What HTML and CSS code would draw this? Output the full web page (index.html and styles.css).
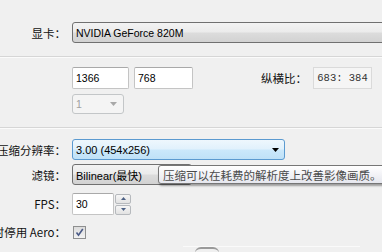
FILE: index.html
```html
<!DOCTYPE html>
<html>
<head>
    <title>显示设置</title>
    <link rel="stylesheet" href="styles.css">
</head>
<body>

<div class="panel">
    <div class="row row-gpu">
        <span class="lbl">显卡：</span>
        <div class="combo combo-gpu">NVIDIA GeForce 820M</div>
    </div>

    <div class="sep sep-top"></div>

    <div class="res">
        <div class="res-left">
            <div class="pair">
                <div class="edit edit-w">1366</div>
                <div class="edit edit-h">768</div>
            </div>
            <div class="combo-off">
                <span>1</span>
                <svg width="7" height="4" viewBox="0 0 7 4"><path d="M0 0H7L3.5 4Z" fill="#a8a8a8"/></svg>
            </div>
        </div>
        <div class="ratio">
            <span class="ratio-lbl">纵横比：</span>
            <div class="ratio-box">683: 384</div>
        </div>
    </div>

    <div class="sep sep-mid"></div>

    <div class="row row-scale">
        <span class="lbl">压缩分辨率：</span>
        <div class="combo combo-hot">
            <span>3.00 (454x256)</span>
            <svg width="7" height="4" viewBox="0 0 7 4"><path d="M0 0H7L3.5 4Z" fill="#000"/></svg>
        </div>
    </div>

    <div class="row row-filter">
        <span class="lbl">滤镜：</span>
        <div class="combo combo-filter">Bilinear(最快)</div>
        <div class="tip">压缩可以在耗费的解析度上改善影像画质。</div>
    </div>

    <div class="row row-fps">
        <span class="lbl">FPS：</span>
        <div class="edit edit-fps">30</div>
        <div class="spin">
            <div class="spin-btn">
                <svg width="5" height="3" viewBox="0 0 5 3"><path d="M0 3H5L2.5 0Z" fill="#4d6185"/></svg>
            </div>
            <div class="spin-btn">
                <svg width="5" height="3" viewBox="0 0 5 3"><path d="M0 0H5L2.5 3Z" fill="#4d6185"/></svg>
            </div>
        </div>
    </div>

    <div class="row row-aero">
        <span class="lbl">时停用 Aero：</span>
        <div class="check">
            <svg width="9" height="9" viewBox="0 0 9 9"><path d="M1.5 4.5L3.5 7.2L7.8 1" fill="none" stroke="#4a5a86" stroke-width="1.6"/></svg>
        </div>
    </div>

    <div class="foot">
        <span class="foot-mark"></span>
    </div>
</div>

</body>
</html>
```

FILE: styles.css
```css
body {
    margin: 0;
    width: 382px;
    height: 252px;
    overflow: hidden;
    background-color: #f0f0f0;
    font-family: "Liberation Sans", "Noto Sans CJK SC", sans-serif;
    font-size: 11px;
    color: #000;
}

.panel {
    position: relative;
    width: 382px;
}

.row {
    display: flex;
    align-items: center;
}

.lbl {
    flex: none;
    width: 66px;
    margin-right: 6px;
    display: flex;
    justify-content: flex-end;
    white-space: nowrap;
    font-family: "Noto Sans CJK SC", sans-serif;
    font-size: 11.5px;
    color: #111;
}

.combo {
    flex: none;
    box-sizing: border-box;
    height: 21px;
    padding: 0 3px;
    display: flex;
    align-items: center;
    justify-content: space-between;
    border: 1px solid #707070;
    border-radius: 3px;
    background: linear-gradient(#f3f3f3 0%, #ebebeb 48%, #dcdcdc 52%, #d2d2d2 100%);
    white-space: nowrap;
}

.row-gpu {
    margin-top: 22px;
}

.combo-gpu {
    width: 330px;
    font-size: 10.5px;
}

.sep {
    height: 0;
    border-top: 1px solid #d6d6d6;
    border-bottom: 1px solid #fbfbfb;
}

.sep-top {
    margin-top: 13px;
}

.sep-mid {
    margin-top: 13px;
}

.res {
    display: flex;
    align-items: flex-start;
    justify-content: space-between;
    padding: 9px 10px 0 72px;
}

.pair {
    display: flex;
    gap: 5px;
}

.edit {
    box-sizing: border-box;
    height: 22px;
    padding-left: 3px;
    display: flex;
    align-items: center;
    background-color: #fff;
    border: 1px solid #c4c4c4;
    border-top-color: #a9a9a9;
    border-radius: 2px;
    font-size: 10.5px;
}

.edit-w {
    width: 57px;
}

.edit-h {
    width: 59px;
}

.combo-off {
    box-sizing: border-box;
    width: 52px;
    height: 20px;
    margin-top: 5px;
    padding: 0 6px 0 3px;
    display: flex;
    align-items: center;
    justify-content: space-between;
    background-color: #f4f4f4;
    border: 1px solid #c3c6c8;
    border-radius: 3px;
    color: #a0a0a0;
    font-size: 10.5px;
}

.ratio {
    display: flex;
    align-items: center;
    height: 22px;
}

.ratio-lbl {
    margin-right: 6px;
    font-family: "Noto Sans CJK SC", sans-serif;
    font-size: 11.5px;
    color: #111;
}

.ratio-box {
    box-sizing: border-box;
    width: 59px;
    height: 22px;
    display: flex;
    align-items: center;
    justify-content: center;
    background-color: #f5f5f5;
    border: 1px solid #dadada;
    font-family: "Liberation Mono", monospace;
    font-size: 10.5px;
    color: #333;
}

.row-scale {
    margin-top: 10px;
}

.combo-hot {
    width: 213px;
    padding-right: 5px;
    border-color: #5b9ad0;
    background: linear-gradient(#eef7fd 0%, #e1f1fc 48%, #cbe8fb 52%, #bfe1f7 100%);
}

.row-filter {
    position: relative;
    margin-top: 4px;
}

.combo-filter {
    width: 120px;
}

.tip {
    position: absolute;
    left: 158px;
    top: 1px;
    box-sizing: border-box;
    height: 19px;
    padding: 0 20px 0 4px;
    display: flex;
    align-items: center;
    white-space: nowrap;
    border: 1px solid #767676;
    border-radius: 3px;
    background: linear-gradient(#ffffff, #e6e7ee);
    box-shadow: 1px 2px 2px rgba(0, 0, 0, 0.35);
    font-family: "Noto Sans CJK SC", sans-serif;
    font-size: 11.5px;
    color: #4a4a4a;
}

.row-fps {
    margin-top: 8px;
}

.edit-fps {
    width: 42px;
}

.spin {
    display: flex;
    flex-direction: column;
    gap: 1px;
    margin-left: 1px;
}

.spin-btn {
    box-sizing: border-box;
    width: 16px;
    height: 10px;
    display: flex;
    align-items: center;
    justify-content: center;
    border: 1px solid #b6b9bd;
    border-radius: 2px;
    background: linear-gradient(#f6f6f6, #e2e2e2);
}

.row-aero {
    margin-top: 9px;
}

.check {
    box-sizing: border-box;
    width: 13px;
    height: 13px;
    margin-left: 1px;
    display: flex;
    align-items: center;
    justify-content: center;
    border: 1px solid #8e8f8f;
    background: linear-gradient(#dcdcdc, #f2f2f2);
}

.foot {
    margin: 6px 22px 0 183px;
    height: 0;
    border-top: 1px solid #fafafa;
    position: relative;
}

.foot-mark {
    display: block;
    width: 24px;
    height: 4px;
    margin: 0 0 0 12px;
    border-top: 2px solid #9a9a9a;
    border-radius: 12px 12px 0 0;
}
```
